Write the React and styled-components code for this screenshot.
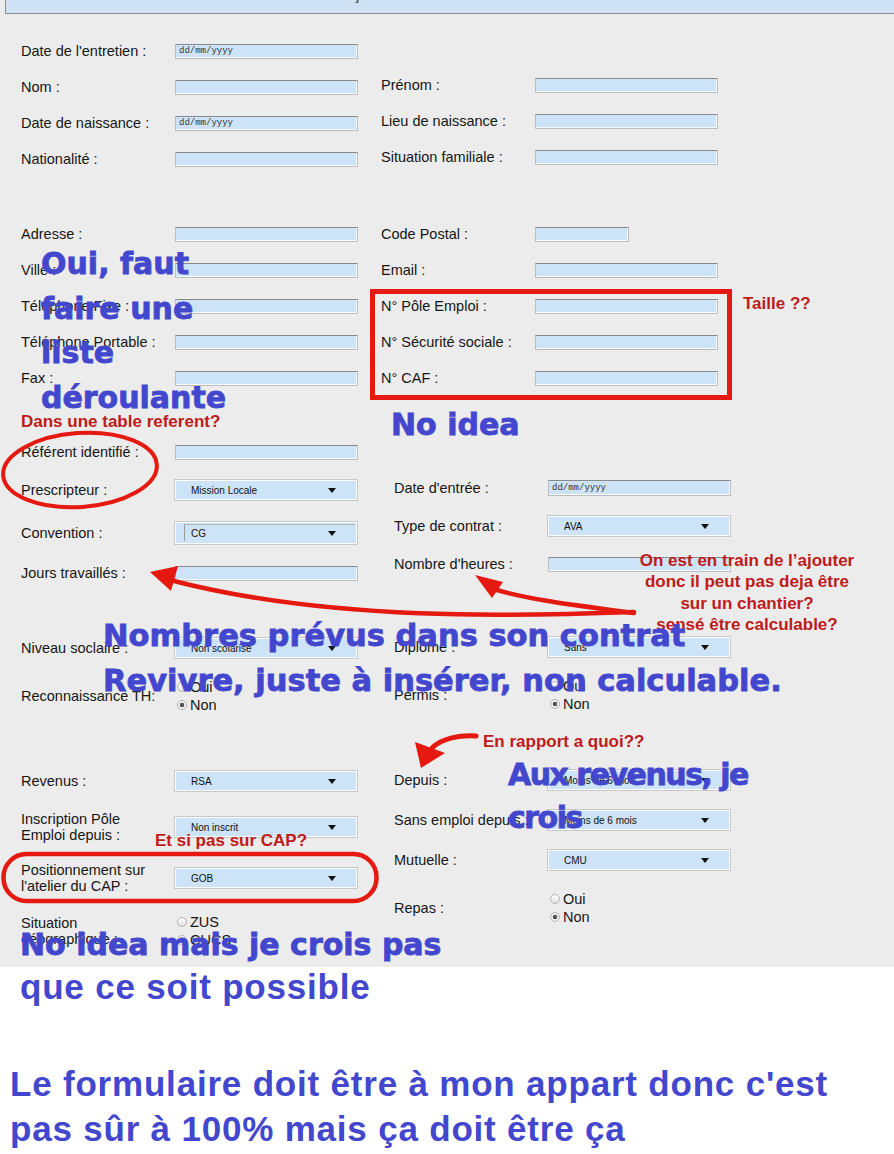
import styled, { createGlobalStyle, css } from "styled-components";

const GlobalStyle = createGlobalStyle`
  html, body {
    margin: 0;
    padding: 0;
    background: #ffffff;
  }
  body {
    font-family: "Liberation Sans", Arial, sans-serif;
  }
`;

const Page = styled.div`
  position: relative;
  width: 894px;
  height: 1154px;
  overflow: hidden;
  background: #ffffff;
`;

const Sheet = styled.div`
  height: 967px;
  background: #ececec;
`;

const TitleBar = styled.div`
  margin-left: 5px;
  height: 14px;
  box-sizing: border-box;
  border-left: 1px solid #8e8e8e;
  border-bottom: 1px solid #8e8e8e;
  background: #cfe2f5;
  overflow: hidden;
  padding-left: 340px;
  font-size: 15px;
  line-height: 18px;
  color: #3a3a3a;
`;

const TitleText = styled.div`
  margin-top: -14px;
`;

const Section = styled.div`
  display: flex;
  padding-left: 21px;
  gap: ${(p) => p.$gap}px;
`;

const Column = styled.div`
  width: 337px;
  display: flex;
  flex-direction: column;
`;

const Field = styled.div`
  display: grid;
  grid-template-columns: 154px 183px;
  align-items: center;
  height: ${(p) => p.$h || 22}px;
  margin-top: ${(p) => p.$mt || 0}px;
`;

const Label = styled.div`
  font-size: 14.5px;
  line-height: 16px;
  color: #161616;
  white-space: nowrap;
`;

const TextInput = styled.input`
  width: ${(p) => p.$w || 183}px;
  height: ${(p) => p.$h || 15}px;
  box-sizing: border-box;
  margin: 0;
  padding: 0 3px;
  background: #cde3f7;
  border: 1px solid #bdbdbd;
  border-top-color: #8a8a8a;
  box-shadow: inset -1px -1px 0 #f6faff;
  font-family: "Liberation Mono", "Courier New", monospace;
  font-size: 9px;
  color: #333;
  outline: none;

  &::placeholder {
    color: #333;
    opacity: 1;
  }
`;

const SelectBox = styled.div`
  position: relative;
  margin-left: -1px;
  width: 184px;
  height: ${(p) => p.$h || 22}px;
  box-sizing: border-box;
  display: flex;
  align-items: center;
  justify-content: space-between;
  padding: 0 21px 0 16px;
  background: #cde3f7;
  border: 1px solid #c8c8c8;
  box-shadow: inset 0 0 0 1px #fafcff;
  font-size: 10px;
  color: #111;

  ${(p) =>
    p.$inset &&
    css`
      &::before {
        content: "";
        position: absolute;
        left: 9px;
        top: 2px;
        right: 2px;
        bottom: 3px;
        border-left: 1px solid #9a9a9a;
        border-top: 1px solid #b5b5b5;
      }
    `}
`;

const Caret = styled.span`
  width: 0;
  height: 0;
  border-left: 4px solid transparent;
  border-right: 4px solid transparent;
  border-top: 5px solid #111;
`;

const RadioGroup = styled.div`
  display: flex;
  flex-direction: column;
  margin-left: 2px;
`;

const RadioOption = styled.label`
  display: flex;
  align-items: center;
  gap: 3px;
  font-size: 14.5px;
  line-height: 18px;
  color: #161616;
`;

const RadioDot = styled.span`
  width: 10px;
  height: 10px;
  box-sizing: border-box;
  border-radius: 50%;
  border: 1px solid #b4b4b4;
  background: ${(p) =>
    p.$checked
      ? "radial-gradient(circle, #555 0 2px, #f1f1f1 2.6px)"
      : "linear-gradient(#fdfdfd, #e1e1e1)"};
`;

const Drawing = styled.svg`
  position: absolute;
  left: 0;
  top: 0;
  pointer-events: none;
`;

const Note = styled.div`
  position: absolute;
  left: ${(p) => p.$x}px;
  top: ${(p) => p.$y}px;
  white-space: nowrap;
`;

const RedNote = styled(Note)`
  color: #be1b1b;
  font-family: "Liberation Sans", Arial, sans-serif;
  font-weight: bold;
  font-size: 17px;
  line-height: 21.3px;
  text-align: center;
  ${(p) => p.$centered && "transform: translateX(-50%);"}
`;

const BlueNote = styled(Note)`
  color: #4347cd;
  font-family: "DejaVu Sans", Verdana, sans-serif;
  font-weight: bold;
  font-size: ${(p) => p.$size || 30}px;
  line-height: ${(p) => p.$lh || 30}px;
  letter-spacing: ${(p) => p.$ls || 0}px;
  -webkit-text-stroke: 0.8px #4347cd;
`;

const Footer = styled.div`
  padding-left: 10px;
  color: #4347cd;
  font-family: "Liberation Sans", Arial, sans-serif;
  font-weight: bold;
  font-size: 35px;
  letter-spacing: 0.8px;
`;

const FooterLine = styled.div`
  margin-left: ${(p) => p.$indent || 0}px;
  margin-top: ${(p) => p.$mt || 0}px;
  line-height: ${(p) => p.$lh}px;
  white-space: nowrap;
`;

function TextField({ label, mt, w, h, date }) {
  return (
    <Field $mt={mt}>
      <Label>{label}</Label>
      <TextInput
        $w={w}
        $h={h}
        placeholder={date ? "dd/mm/yyyy" : ""}
        readOnly
      />
    </Field>
  );
}

function SelectField({ label, value, mt, h, rowH, inset }) {
  return (
    <Field $mt={mt} $h={rowH}>
      <Label>{label}</Label>
      <SelectBox $h={h} $inset={inset}>
        <span>{value}</span>
        <Caret />
      </SelectBox>
    </Field>
  );
}

function RadioField({ label, options, checked, mt }) {
  return (
    <Field $mt={mt} $h={36}>
      <Label>{label}</Label>
      <RadioGroup>
        {options.map((o) => (
          <RadioOption key={o}>
            <RadioDot $checked={o === checked} />
            {o}
          </RadioOption>
        ))}
      </RadioGroup>
    </Field>
  );
}

const RED = "#e5190f";

export default function App() {
  return (
    <>
      <GlobalStyle />
      <Page>
        <Sheet>
          <TitleBar>
            <TitleText>Ajout d'un nouveau bénéficiaire</TitleText>
          </TitleBar>

          <Section $gap={23}>
            <Column>
              <TextField label="Date de l'entretien :" mt={26} date />
              <TextField label="Nom :" mt={14} />
              <TextField label="Date de naissance :" mt={14} date />
              <TextField label="Nationalité :" mt={14} />
              <TextField label="Adresse :" mt={53} />
              <TextField label="Ville :" mt={14} />
              <TextField label="Téléphone Fixe :" mt={14} />
              <TextField label="Téléphone Portable :" mt={14} />
              <TextField label="Fax :" mt={14} />
            </Column>
            <Column>
              <TextField label="Prénom :" mt={60} />
              <TextField label="Lieu de naissance :" mt={14} />
              <TextField label="Situation familiale :" mt={14} />
              <TextField label="Code Postal :" mt={55} w={94} />
              <TextField label="Email :" mt={14} />
              <TextField label="N° Pôle Emploi :" mt={14} />
              <TextField label="N° Sécurité sociale :" mt={14} />
              <TextField label="N° CAF :" mt={14} />
            </Column>
          </Section>

          <Section $gap={36}>
            <Column>
              <TextField label="Référent identifié :" mt={52} />
              <SelectField label="Prescripteur :" value="Mission Locale" mt={16} />
              <SelectField label="Convention :" value="CG" mt={20} h={24} rowH={23} inset />
              <TextField label="Jours travaillés :" mt={18} />
              <SelectField label="Niveau soclaire :" value="Non scolarisé" mt={53} />
              <RadioField
                label="Reconnaissance TH:"
                options={["Oui", "Non"]}
                checked="Non"
                mt={19}
              />
              <SelectField label="Revenus :" value="RSA" mt={56} />
              <SelectField
                label={
                  <>
                    Inscription Pôle
                    <br />
                    Emploi depuis :
                  </>
                }
                value="Non inscrit"
                mt={19}
                rowH={32}
              />
              <SelectField
                label={
                  <>
                    Positionnement sur
                    <br />
                    l'atelier du CAP :
                  </>
                }
                value="GOB"
                mt={19}
                rowH={32}
              />
              <RadioField
                label={
                  <>
                    Situation
                    <br />
                    géographique :
                  </>
                }
                options={["ZUS", "CUCS"]}
                checked="CUCS"
                mt={19}
              />
            </Column>
            <Column>
              <TextField label="Date d'entrée :" mt={88} h={16} date />
              <SelectField label="Type de contrat :" value="AVA" mt={16} />
              <TextField label="Nombre d'heures :" mt={16} />
              <SelectField label="Diplome :" value="Sans" mt={61} />
              <RadioField
                label="Permis :"
                options={["Oui", "Non"]}
                checked="Non"
                mt={19}
              />
              <SelectField label="Depuis :" value="Moins de 6 mois" mt={56} />
              <SelectField label="Sans emploi depuis :" value="Moins de 6 mois" mt={18} />
              <SelectField label="Mutuelle :" value="CMU" mt={18} />
              <RadioField
                label="Repas :"
                options={["Oui", "Non"]}
                checked="Non"
                mt={19}
              />
            </Column>
          </Section>
        </Sheet>

        <Footer>
          <FooterLine $indent={10} $lh={40}>
            que ce soit possible
          </FooterLine>
          <FooterLine $mt={54} $lh={45}>
            Le formulaire doit être à mon appart donc c'est
            <br />
            pas sûr à 100% mais ça doit être ça
          </FooterLine>
        </Footer>

        <Drawing width="894" height="967" viewBox="0 0 894 967">
          <g fill="none" stroke={RED} strokeLinecap="round">
            <rect x="372.5" y="291.5" width="357" height="106" strokeWidth="5" />
            <ellipse
              cx="80"
              cy="470"
              rx="77"
              ry="37"
              strokeWidth="4"
              transform="rotate(-4 80 470)"
            />
            <rect x="3.5" y="854" width="373" height="47" rx="23" strokeWidth="4.5" />
            <path d="M 634 612 C 520 616 330 622 170 580" strokeWidth="4.5" />
            <path d="M 634 613 C 580 606 530 600 497 590" strokeWidth="4.5" />
            <path d="M 476 736 C 460 735 442 738 432 748" strokeWidth="5" />
          </g>
          <g fill={RED}>
            <polygon points="150,572 178,566 171,591" />
            <polygon points="475,575 503,582 492,598" />
            <polygon points="421,768 415,742 445,753" />
          </g>
        </Drawing>

        <RedNote $x={743} $y={293}>Taille ??</RedNote>
        <RedNote $x={21} $y={411}>Dans une table referent?</RedNote>
        <RedNote $x={747} $y={550} $centered>
          On est en train de l’ajouter
          <br />
          donc il peut pas deja être
          <br />
          sur un chantier?
          <br />
          sensé être calculable?
        </RedNote>
        <RedNote $x={483} $y={731}>En rapport a quoi??</RedNote>
        <RedNote $x={155} $y={830}>Et si pas sur CAP?</RedNote>

        <BlueNote $x={41} $y={242} $lh={44.5}>
          Oui, faut
          <br />
          faire une
          <br />
          liste
          <br />
          déroulante
        </BlueNote>
        <BlueNote $x={391} $y={410}>No idea</BlueNote>
        <BlueNote $x={103} $y={613} $size={30.5} $lh={45}>
          Nombres prévus dans son contrat
          <br />
          Revivre, juste à insérer, non calculable.
        </BlueNote>
        <BlueNote $x={508} $y={753} $lh={43} $ls={-1.5}>
          Aux revenus, je
          <br />
          crois
        </BlueNote>
        <BlueNote $x={20} $y={930}>No idea mais je crois pas</BlueNote>
      </Page>
    </>
  );
}
